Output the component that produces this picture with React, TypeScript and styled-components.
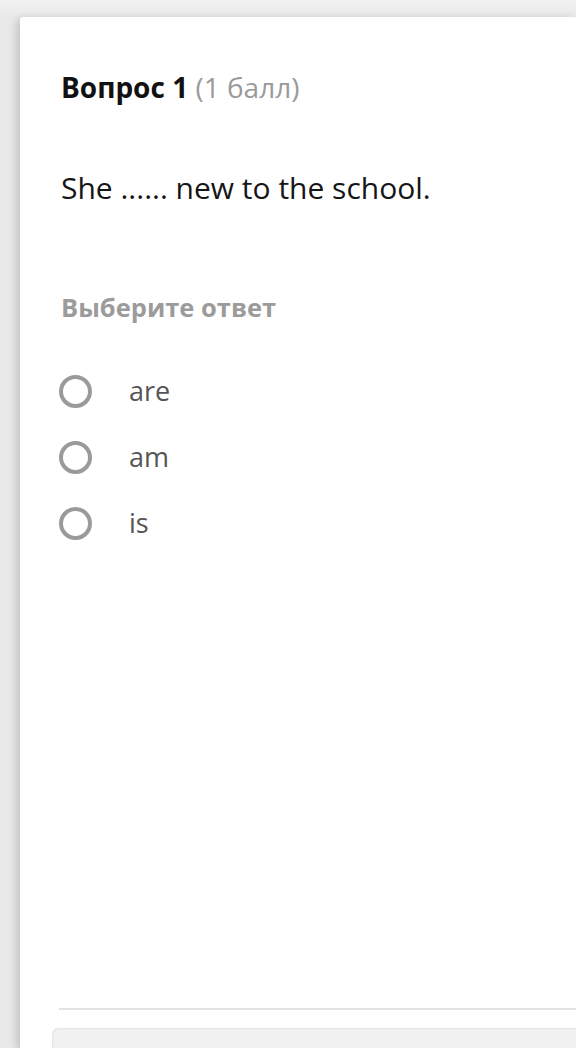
import React, {FC} from 'react';
import styled, {createGlobalStyle} from 'styled-components';

interface IOption {
    id: number;
    label: string;
}

const options: IOption[] = [
    {id: 1, label: 'are'},
    {id: 2, label: 'am'},
    {id: 3, label: 'is'},
];

const GlobalStyle = createGlobalStyle`
    html, body {
        margin: 0;
        padding: 0;
        height: 100%;
        overflow: hidden;
        background: #ebebeb;
        font-family: 'Open Sans', 'Noto Sans', sans-serif;
    }
`;

/** Строка с вариантом ответа */
const OptionRow: FC<{label: string}> = ({label}) => (
    <Row>
        <Radio />
        <OptionText>{label}</OptionText>
    </Row>
);

const App: FC = () => (
    <Page>
        <GlobalStyle />
        <Card>
            <Title>
                Вопрос 1 <Points>(1 балл)</Points>
            </Title>
            <QuestionText>She ...... new to the school.</QuestionText>
            <Prompt>Выберите ответ</Prompt>
            <OptionsList>
                {options.map((o) => (
                    <OptionRow key={o.id} label={o.label} />
                ))}
            </OptionsList>
            <Spacer />
            <Divider />
            <Footer />
        </Card>
    </Page>
);

export default App;

const Page = styled.div`
    height: 1048px;
    padding: 17px 0 0 20px;
    box-sizing: border-box;
    background: linear-gradient(#f2f2f2, #e9e9e9 17px);
    overflow: hidden;
`;

const Card = styled.div`
    display: flex;
    flex-direction: column;
    height: 1031px;
    padding: 50px 0 0 41px;
    box-sizing: border-box;
    background: #fff;
    border-top-left-radius: 3px;
    box-shadow: -3px 2px 10px rgba(0, 0, 0, 0.18);
`;

const Title = styled.div`
    font-size: 28px;
    line-height: 40px;
    font-weight: 700;
    color: #111;
`;

const Points = styled.span`
    font-weight: 400;
    color: #9a9a9a;
`;

const QuestionText = styled.div`
    margin-top: 61px;
    font-size: 30px;
    line-height: 40px;
    color: #161616;
`;

const Prompt = styled.div`
    margin-top: 84px;
    font-size: 25.5px;
    line-height: 30px;
    font-weight: 700;
    color: #9b9b9b;
`;

const OptionsList = styled.div`
    display: flex;
    flex-direction: column;
    margin-top: 36px;
`;

const Row = styled.div`
    display: flex;
    align-items: center;
    height: 66px;
`;

const Radio = styled.span`
    width: 25px;
    height: 25px;
    margin-left: -2px;
    border: 4px solid #9a9a9a;
    border-radius: 50%;
    flex-shrink: 0;
`;

const OptionText = styled.span`
    margin-left: 37px;
    font-size: 27px;
    line-height: 40px;
    color: #555;
`;

const Spacer = styled.div`
    flex: 1;
`;

const Divider = styled.div`
    height: 2px;
    margin-left: -2px;
    background: #e2e2e2;
`;

const Footer = styled.div`
    height: 20px;
    margin: 18px 0 0 -9px;
    background: #f1f1f1;
    border-top-left-radius: 6px;
    box-shadow: inset 1px 1px 2px rgba(0, 0, 0, 0.06);
`;
